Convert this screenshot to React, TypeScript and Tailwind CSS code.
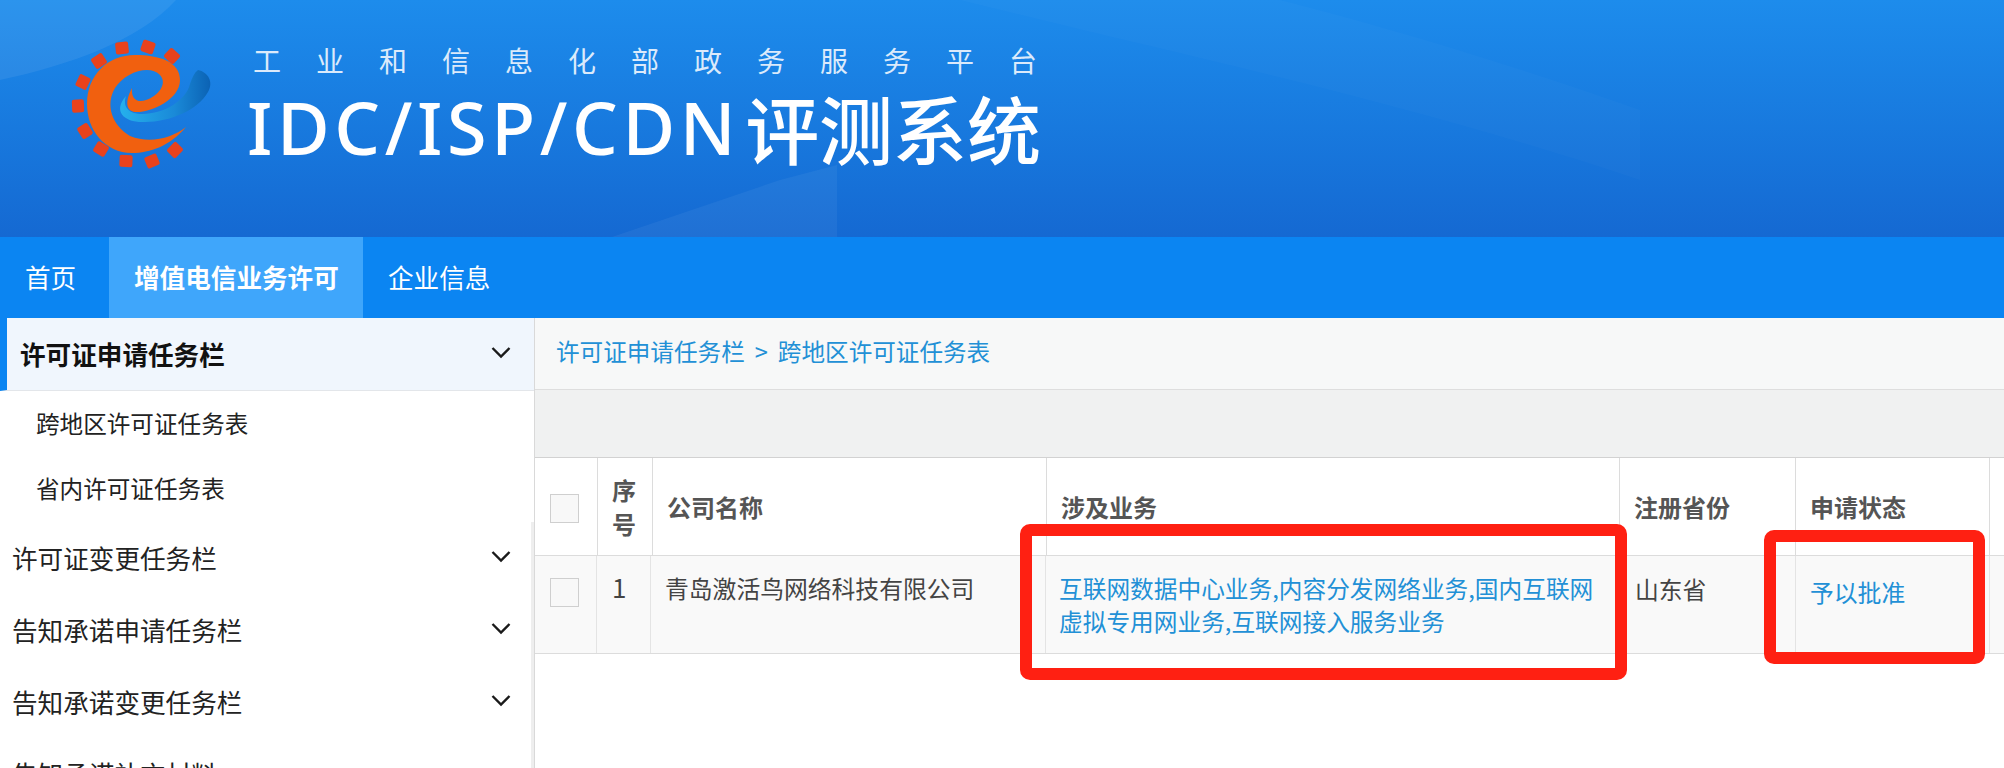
import { ReactNode } from "react";

const teeth = [
  [122, 48], [148, 47], [172, 56], [99, 61], [83, 82], [78, 106],
  [85, 131], [101, 149], [126, 161], [152, 161], [175, 150],
];

const menusFechados = ["许可证变更任务栏", "告知承诺申请任务栏", "告知承诺变更任务栏", "告知承诺补充材料"];

function Chevron() {
  return (
    <svg width="20" height="13" viewBox="0 0 20 13" fill="none" className="mb-1 shrink-0">
      <path d="M1.5 2 10 10.5 18.5 2" stroke="#1a1a1a" strokeWidth="2.4" />
    </svg>
  );
}

function Logo() {
  return (
    <svg width="160" height="150" viewBox="60 30 160 150" className="shrink-0">
      <defs>
        <linearGradient id="swirl" x1="0" y1="0" x2="1" y2="0">
          <stop offset="0" stopColor="#25b0ec" />
          <stop offset="0.6" stopColor="#1a8ad8" />
          <stop offset="1" stopColor="#0b62b4" />
        </linearGradient>
      </defs>
      {teeth.map(([x, y]) => (
        <rect
          key={`${x}-${y}`}
          x={x - 6.5}
          y={y - 6}
          width="13"
          height="12"
          rx="2"
          fill="#e8421c"
          transform={`rotate(${(Math.atan2(y - 104, x - 128) * 180) / Math.PI + 90} ${x} ${y})`}
        />
      ))}
      <path
        d="M198 70C208 72 214 82 208 92 198 110 170 122 145 122 125 123 112 112 126 96 122 108 130 114 142 114 165 114 186 100 190 84 192 78 194 73 198 70Z"
        fill="url(#swirl)"
      />
      <path
        d="M186 127C170 146 150 153 132 153 105 153 87 130 87 104 87 75 108 55 135 55 160 55 180 62 180 80 180 100 150 113 135 112 127 111 124 103 132 88 131 100 138 103 146 100 158 96 168 84 160 75 150 64 125 72 115 88 105 105 112 125 130 136 150 144 172 138 186 127Z"
        fill="#f1600f"
      />
    </svg>
  );
}

function Caixa() {
  return <div className="w-[29px] h-[29px] border border-[#cfcfcf] bg-[#f8f8f8]" />;
}

function CabecalhoCelula({ children }: { children: ReactNode }) {
  return (
    <div className="border-l border-[#dcdcdc] pl-[14px] pr-2 flex items-center font-bold text-[#555] text-[24px] leading-[34px]">
      {children}
    </div>
  );
}

export default function App() {
  return (
    <div className="relative h-[768px] overflow-hidden bg-white font-['Noto_Sans_CJK_SC','Noto_Sans',sans-serif]">
      {/* banner */}
      <header className="relative h-[237px] overflow-hidden bg-gradient-to-b from-[#1d8cec] to-[#1569d2]">
        <svg width="2004" height="237" className="absolute inset-0">
          <path d="M0 80C70 65 140 40 176 0H0Z" fill="#fff" opacity="0.07" />
          <path d="M612 237 780 180 837 165V237Z" fill="#fff" opacity="0.05" />
          <path d="M960 0C1200 60 1400 100 1640 180V110C1500 60 1360 20 1280 0Z" fill="#fff" opacity="0.02" />
        </svg>
        <div className="relative flex pl-[60px] pt-[30px]">
          <Logo />
          <div className="ml-[27px] pt-[12px]">
            <div className="pl-[6px] text-[28px] leading-[36px] tracking-[35px] whitespace-nowrap text-[#dbeafb]">
              工业和信息化部政务服务平台
            </div>
            <div className="mt-[9px] flex items-center h-[80px] whitespace-nowrap text-white">
              <span className="text-[72px] leading-[80px] tracking-[4.6px] font-medium font-['Noto_Sans',sans-serif]">
                IDC/ISP/CDN
              </span>
              <span className="ml-[5px] text-[74px] leading-[80px] font-medium">评测系统</span>
            </div>
          </div>
        </div>
      </header>

      {/* nav */}
      <nav className="flex h-[81px] bg-[#0b85f2] text-white text-[25.6px]">
        <a className="w-[109px] pl-[25px] flex items-center">首页</a>
        <a className="w-[254px] bg-[#3fa6fb] pl-[25px] flex items-center font-bold">增值电信业务许可</a>
        <a className="pl-[25px] flex items-center">企业信息</a>
      </nav>

      <div className="flex">
        {/* sidebar */}
        <aside className="w-[535px] shrink-0 border-r border-[#d9d9d9] text-[#222] text-[25.6px]">
          <div className="flex items-center justify-between h-[73px] pt-[1px] bg-[#f0f6fd] border-l-[7px] border-l-[#0b85f2] border-b border-b-[#e3e6ea] pl-[13px] pr-[23px]">
            <span className="font-bold text-[#111]">许可证申请任务栏</span>
            <Chevron />
          </div>
          <div className="flex items-center h-[65px] pl-[36px] text-[23.6px]">跨地区许可证任务表</div>
          <div className="flex items-center h-[66px] pl-[36px] text-[23.6px]">省内许可证任务表</div>
          {menusFechados.map((item, i) => (
            <div key={item} className="flex items-center justify-between h-[72px] pl-[12px] pr-[23px]">
              <span>{item}</span>
              {i < 3 && <Chevron />}
            </div>
          ))}
        </aside>

        {/* content */}
        <main className="flex-1 min-w-0">
          <div className="flex items-center h-[72px] pb-[4px] pl-[21px] bg-[#f7f8f8] border-b border-[#dedede] text-[23.6px] text-[#2290d6]">
            许可证申请任务栏<span className="mx-[10px]">&gt;</span>跨地区许可证任务表
          </div>
          <div className="h-[68px] bg-[#f0f1f1] border-b border-[#d2d2d2]" />
          <div className="grid grid-cols-[62px_55px_394px_573px_176px_194px_1fr] h-[98px] border-b border-[#dcdcdc]">
            <div className="flex items-center pl-[15px] pt-[3px]">
              <Caixa />
            </div>
            <CabecalhoCelula>
              <span>
                序
                <br />号
              </span>
            </CabecalhoCelula>
            <CabecalhoCelula>公司名称</CabecalhoCelula>
            <CabecalhoCelula>涉及业务</CabecalhoCelula>
            <CabecalhoCelula>注册省份</CabecalhoCelula>
            <CabecalhoCelula>申请状态</CabecalhoCelula>
            <CabecalhoCelula> </CabecalhoCelula>
          </div>
          <div className="grid grid-cols-[61px_54px_395px_574px_176px_194px_1fr] h-[98px] bg-[#f9f9f9] border-b border-[#dcdcdc] text-[23.8px] leading-[33px] text-[#444]">
            <div className="pl-[15px] pt-[22px]">
              <Caixa />
            </div>
            <div className="border-l border-[#e4e4e4] pl-[15px] pt-[14px] text-[26px]">1</div>
            <div className="border-l border-[#e4e4e4] pl-[14px] pt-[15px]">青岛激活鸟网络科技有限公司</div>
            <div className="border-l border-[#e4e4e4] pl-[13px] pr-[14px] pt-[16px] text-[23.7px] text-[#2290d6]">
              互联网数据中心业务,内容分发网络业务,国内互联网虚拟专用网业务,互联网接入服务业务
            </div>
            <div className="border-l border-[#e4e4e4] pl-[15px] pt-[16px]">山东省</div>
            <div className="border-l border-[#e4e4e4] pl-[14px] pt-[19px] text-[#2290d6]">予以批准</div>
            <div className="border-l border-[#e4e4e4]" />
          </div>
        </main>
      </div>

      {/* barra clara do menu lateral */}
      <div className="absolute left-[531px] top-[522px] bottom-0 w-[3px] bg-[#eeeeee]" />

      {/* marcações vermelhas */}
      <div className="absolute left-[1020px] top-[524px] w-[607px] h-[156px] border-[12px] border-[#ff2012] rounded-[10px]" />
      <div className="absolute left-[1764px] top-[530px] w-[221px] h-[134px] border-[12px] border-[#ff2012] rounded-[10px]" />
    </div>
  );
}
